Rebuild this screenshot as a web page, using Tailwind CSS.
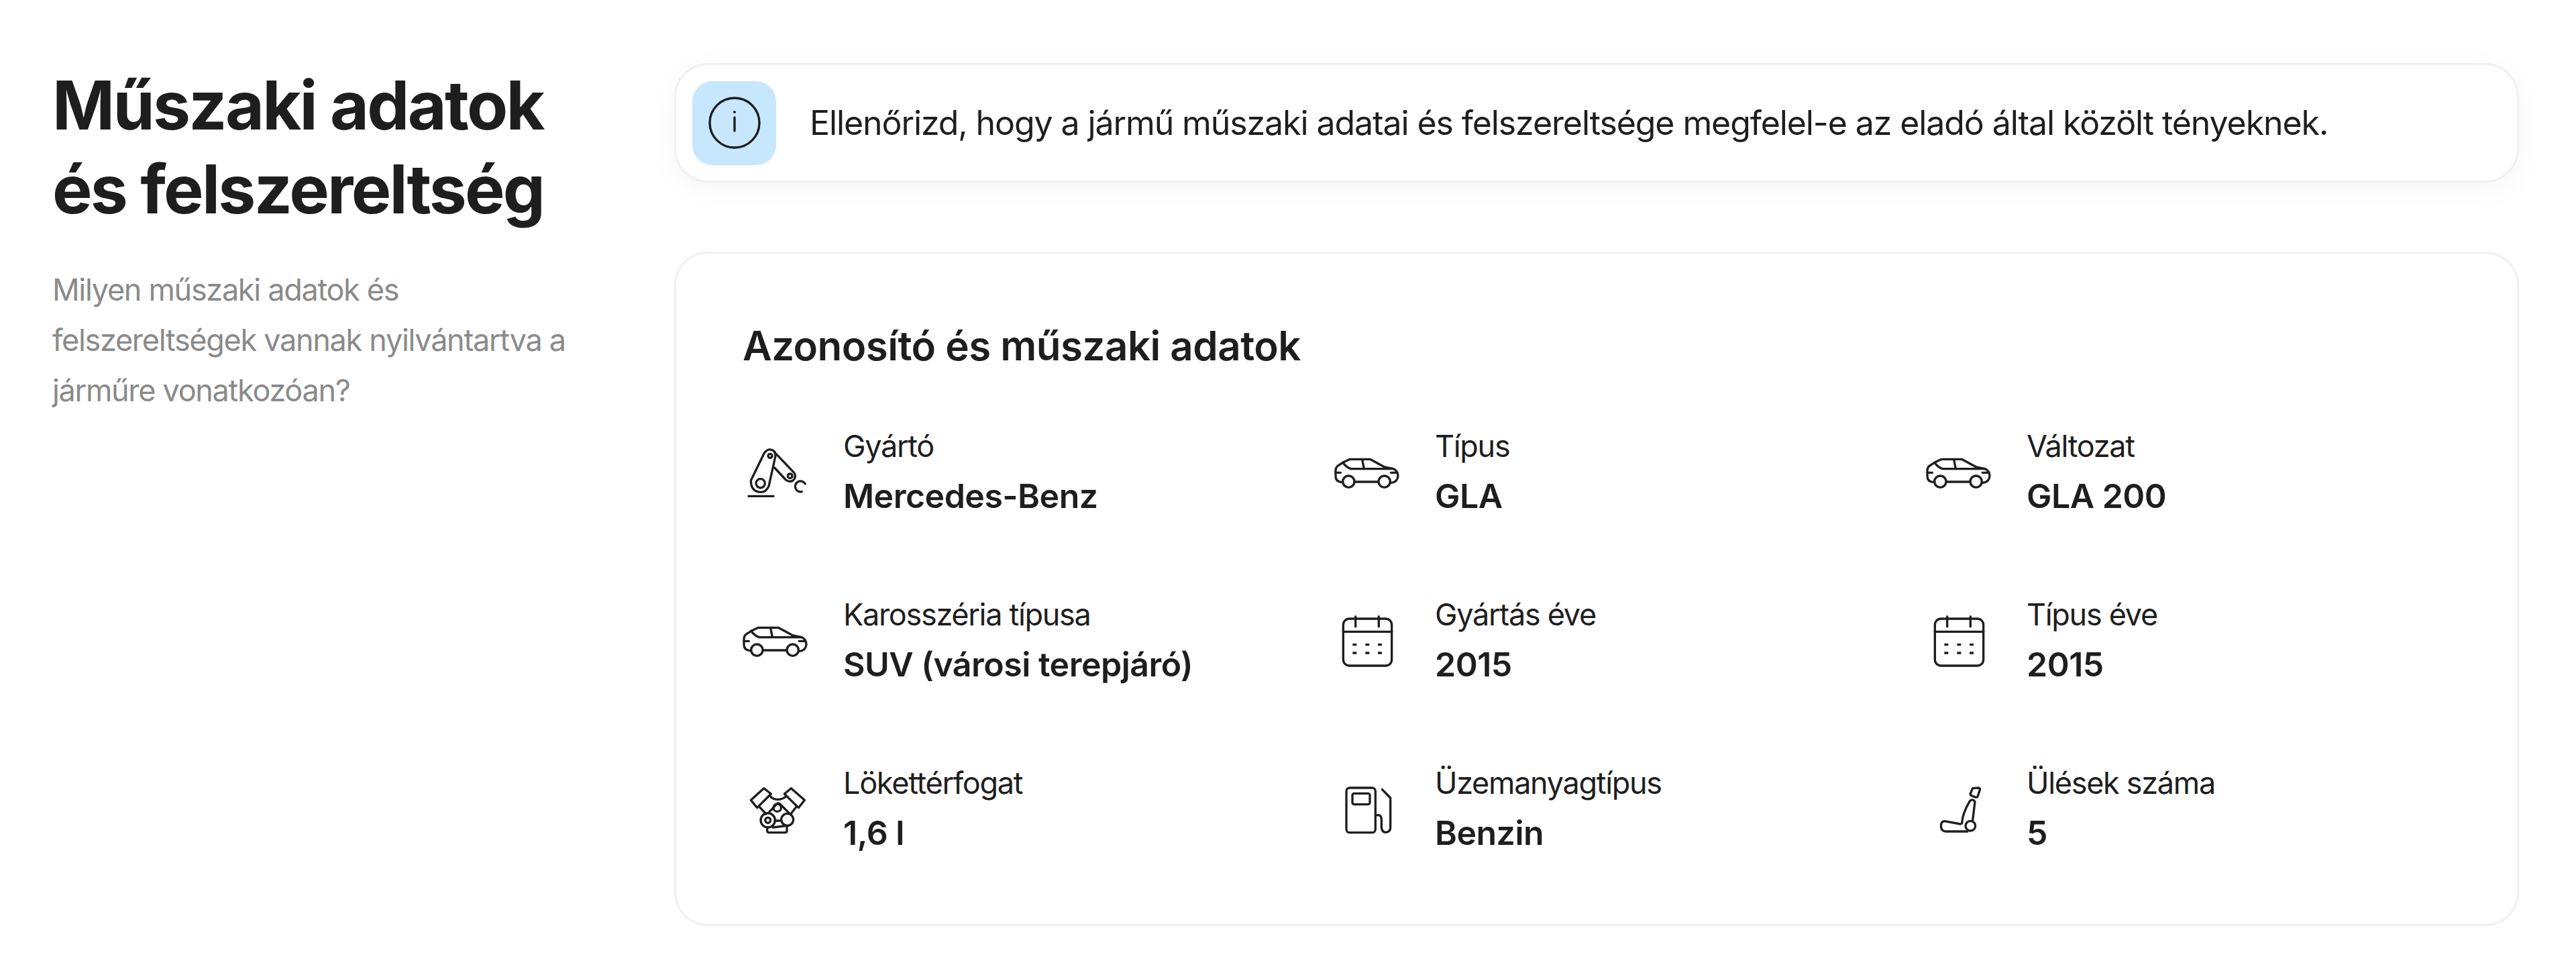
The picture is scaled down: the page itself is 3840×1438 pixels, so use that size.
<!DOCTYPE html>
<html lang="hu">
<head>
    <meta charset="UTF-8">
    <title>Műszaki adatok és felszereltség</title>
    <script src="https://cdn.jsdelivr.net/npm/@tailwindcss/browser@4"></script>
</head>
<body class="bg-white font-['Inter',sans-serif] text-[#1e1e1e]">
    <div class="flex pt-[94px] pl-[78px] pr-[85px] h-[1438px] overflow-hidden">
        <!-- Left column -->
        <div class="w-[927px] shrink-0">
            <h2 class="text-[100px] leading-[125px] font-bold tracking-[-2.7px]">Műszaki adatok<br>és felszereltség</h2>
            <p class="mt-[50px] text-[45px] leading-[75px] tracking-[-1.3px] text-[#8a8a8a]">Milyen műszaki adatok és<br>felszereltségek vannak nyilvántartva a<br>járműre vonatkozóan?</p>
        </div>

        <!-- Right column -->
        <div class="flex-1 flex flex-col gap-[103px]">
            <!-- Notice -->
            <div class="flex items-center gap-[50px] h-[178px] px-[24px] bg-white border-[3px] border-[#f0f0f0] rounded-[50px] shadow-[0_10px_50px_rgba(0,0,0,0.04)]">
                <div class="w-[125px] h-[125px] shrink-0 flex items-center justify-center bg-[#c7e7ff] rounded-[30px]">
                    <svg class="w-[100px] h-[100px]" viewBox="0 0 100 100" fill="none" stroke="#1e1e1e" stroke-width="3.4" stroke-linecap="round">
                        <circle cx="50" cy="50" r="37"/>
                        <path d="M50 42V62"/>
                        <circle cx="50" cy="34" r="2" fill="#1e1e1e" stroke="none"/>
                    </svg>
                </div>
                <p class="text-[50px] leading-[75px] tracking-[-1.09px]">Ellenőrizd, hogy a jármű műszaki adatai és felszereltsége megfelel-e az eladó által közölt tényeknek.</p>
            </div>

            <!-- Data card -->
            <div class="h-[1005px] px-[99px] pt-[97px] border-[3px] border-[#f0f0f0] rounded-[50px]">
                <h3 class="text-[60px] leading-[80px] font-semibold tracking-[-0.5px]">Azonosító és műszaki adatok</h3>
                <div class="mt-[76px] grid grid-cols-3 gap-x-[100px] gap-y-[103px]">

                    <div class="flex items-center gap-[50px]">
                        <svg class="w-[100px] h-[100px] shrink-0" viewBox="75 42 300 300" fill="none" stroke="#1e1e1e" stroke-width="10" stroke-linecap="round" stroke-linejoin="round">
                            <path d="M112 225L172 102Q185 85 200 87Q222 90 222 115L192 250Q180 278 155 277Q112 275 112 225Z"/>
                            <circle cx="155" cy="238" r="20"/>
                            <circle cx="198" cy="115" r="9"/>
                            <path d="M222 103L305 190Q318 210 300 225Q285 235 268 222L218 168"/>
                            <circle cx="287" cy="205" r="10"/>
                            <path d="M102 295H213"/>
                            <path d="M355 240A24 24 0 1 0 340 275"/>
                        </svg>
                        <div>
                            <div class="text-[45px] leading-[68px] tracking-[-1.3px]">Gyártó</div>
                            <div class="text-[50px] leading-[80px] font-semibold tracking-[-0.5px]">Mercedes-Benz</div>
                        </div>
                    </div>

                    <div class="flex items-center gap-[50px]">
                        <svg class="w-[100px] h-[100px] shrink-0" viewBox="30 -18 300 300" fill="none" stroke="#1e1e1e" stroke-width="10" stroke-linecap="round" stroke-linejoin="round">
                            <path d="M68 172H60Q36 170 36 145V118Q38 105 45 100L68 85L100 70H190L255 105L295 113Q315 122 315 145Q312 172 285 175H280"/>
                            <path d="M122 171H228"/>
                            <circle cx="94" cy="170" r="26"/>
                            <circle cx="254" cy="170" r="26"/>
                            <path d="M68 85Q85 108 105 113H295"/>
                            <path d="M155 72L163 112"/>
                            <path d="M36 130H58"/>
                            <path d="M283 130H310"/>
                        </svg>
                        <div>
                            <div class="text-[45px] leading-[68px] tracking-[-1.3px]">Típus</div>
                            <div class="text-[50px] leading-[80px] font-semibold tracking-[-0.5px]">GLA</div>
                        </div>
                    </div>

                    <div class="flex items-center gap-[50px]">
                        <svg class="w-[100px] h-[100px] shrink-0" viewBox="30 -18 300 300" fill="none" stroke="#1e1e1e" stroke-width="10" stroke-linecap="round" stroke-linejoin="round">
                            <path d="M68 172H60Q36 170 36 145V118Q38 105 45 100L68 85L100 70H190L255 105L295 113Q315 122 315 145Q312 172 285 175H280"/>
                            <path d="M122 171H228"/>
                            <circle cx="94" cy="170" r="26"/>
                            <circle cx="254" cy="170" r="26"/>
                            <path d="M68 85Q85 108 105 113H295"/>
                            <path d="M155 72L163 112"/>
                            <path d="M36 130H58"/>
                            <path d="M283 130H310"/>
                        </svg>
                        <div>
                            <div class="text-[45px] leading-[68px] tracking-[-1.3px]">Változat</div>
                            <div class="text-[50px] leading-[80px] font-semibold tracking-[-0.5px]">GLA 200</div>
                        </div>
                    </div>

                    <div class="flex items-center gap-[50px]">
                        <svg class="w-[100px] h-[100px] shrink-0" viewBox="30 -18 300 300" fill="none" stroke="#1e1e1e" stroke-width="10" stroke-linecap="round" stroke-linejoin="round">
                            <path d="M68 172H60Q36 170 36 145V118Q38 105 45 100L68 85L100 70H190L255 105L295 113Q315 122 315 145Q312 172 285 175H280"/>
                            <path d="M122 171H228"/>
                            <circle cx="94" cy="170" r="26"/>
                            <circle cx="254" cy="170" r="26"/>
                            <path d="M68 85Q85 108 105 113H295"/>
                            <path d="M155 72L163 112"/>
                            <path d="M36 130H58"/>
                            <path d="M283 130H310"/>
                        </svg>
                        <div>
                            <div class="text-[45px] leading-[68px] tracking-[-1.3px]">Karosszéria típusa</div>
                            <div class="text-[50px] leading-[80px] font-semibold tracking-[-0.5px]">SUV (városi terepjáró)</div>
                        </div>
                    </div>

                    <div class="flex items-center gap-[50px]">
                        <svg class="w-[100px] h-[100px] shrink-0" viewBox="30 12 300 300" fill="none" stroke="#1e1e1e" stroke-width="10" stroke-linecap="round" stroke-linejoin="round">
                            <rect x="70" y="60" width="217" height="210" rx="27"/>
                            <path d="M70 118H287"/>
                            <path d="M125 50V95"/>
                            <path d="M229 50V95"/>
                            <path d="M112 176H130M169 176H187M225 176H243M112 213H130M169 213H187M225 213H243" stroke-linecap="butt"/>
                        </svg>
                        <div>
                            <div class="text-[45px] leading-[68px] tracking-[-1.3px]">Gyártás éve</div>
                            <div class="text-[50px] leading-[80px] font-semibold tracking-[-0.5px]">2015</div>
                        </div>
                    </div>

                    <div class="flex items-center gap-[50px]">
                        <svg class="w-[100px] h-[100px] shrink-0" viewBox="30 12 300 300" fill="none" stroke="#1e1e1e" stroke-width="10" stroke-linecap="round" stroke-linejoin="round">
                            <rect x="70" y="60" width="217" height="210" rx="27"/>
                            <path d="M70 118H287"/>
                            <path d="M125 50V95"/>
                            <path d="M229 50V95"/>
                            <path d="M112 176H130M169 176H187M225 176H243M112 213H130M169 213H187M225 213H243" stroke-linecap="butt"/>
                        </svg>
                        <div>
                            <div class="text-[45px] leading-[68px] tracking-[-1.3px]">Típus éve</div>
                            <div class="text-[50px] leading-[80px] font-semibold tracking-[-0.5px]">2015</div>
                        </div>
                    </div>

                    <div class="flex items-center gap-[50px]">
                        <svg class="w-[100px] h-[100px] shrink-0" viewBox="45 12 300 300" fill="none" stroke="#1e1e1e" stroke-width="10" stroke-linecap="round" stroke-linejoin="round">
                            <path d="M140 65L172 90L110 152L82 118Z"/>
                            <path d="M262 65L232 90L295 152L322 118Z"/>
                            <path d="M168 100Q180 115 200 115Q225 115 240 100"/>
                            <path d="M120 148L150 180"/>
                            <path d="M285 148L262 178"/>
                            <path d="M165 170L200 133Q205 130 212 135L255 178"/>
                            <circle cx="200" cy="152" r="17"/>
                            <circle cx="158" cy="208" r="32"/>
                            <circle cx="158" cy="208" r="12"/>
                            <circle cx="245" cy="205" r="27"/>
                            <path d="M155 240V255Q155 263 165 263H235Q243 263 243 255V232"/>
                            <path d="M180 240L243 232"/>
                            <path d="M190 210H218"/>
                        </svg>
                        <div>
                            <div class="text-[45px] leading-[68px] tracking-[-1.3px]">Lökettérfogat</div>
                            <div class="text-[50px] leading-[80px] font-semibold tracking-[-0.5px]">1,6 l</div>
                        </div>
                    </div>

                    <div class="flex items-center gap-[50px]">
                        <svg class="w-[100px] h-[100px] shrink-0" viewBox="24 12 300 300" fill="none" stroke="#1e1e1e" stroke-width="10" stroke-linecap="round" stroke-linejoin="round">
                            <rect x="78" y="63" width="130" height="200" rx="15"/>
                            <rect x="105" y="88" width="78" height="49" rx="8"/>
                            <path d="M208 185H222Q235 187 235 205V240Q237 262 255 262Q275 260 275 240V108L238 70"/>
                        </svg>
                        <div>
                            <div class="text-[45px] leading-[68px] tracking-[-1.3px]">Üzemanyagtípus</div>
                            <div class="text-[50px] leading-[80px] font-semibold tracking-[-0.5px]">Benzin</div>
                        </div>
                    </div>

                    <div class="flex items-center gap-[50px]">
                        <svg class="w-[100px] h-[100px] shrink-0" viewBox="36 12 300 300" fill="none" stroke="#1e1e1e" stroke-width="10" stroke-linecap="round" stroke-linejoin="round">
                            <path d="M245 65L272 63Q279 65 277 72L268 100Q265 107 258 105L238 97Q232 92 236 85Z"/>
                            <path d="M197 222Q198 180 232 122Q245 110 255 125L245 208"/>
                            <path d="M190 225L120 212Q103 212 103 235Q105 258 125 258H222"/>
                            <circle cx="235" cy="233" r="22"/>
                        </svg>
                        <div>
                            <div class="text-[45px] leading-[68px] tracking-[-1.3px]">Ülések száma</div>
                            <div class="text-[50px] leading-[80px] font-semibold tracking-[-0.5px]">5</div>
                        </div>
                    </div>

                </div>
            </div>
        </div>
    </div>
</body>
</html>
